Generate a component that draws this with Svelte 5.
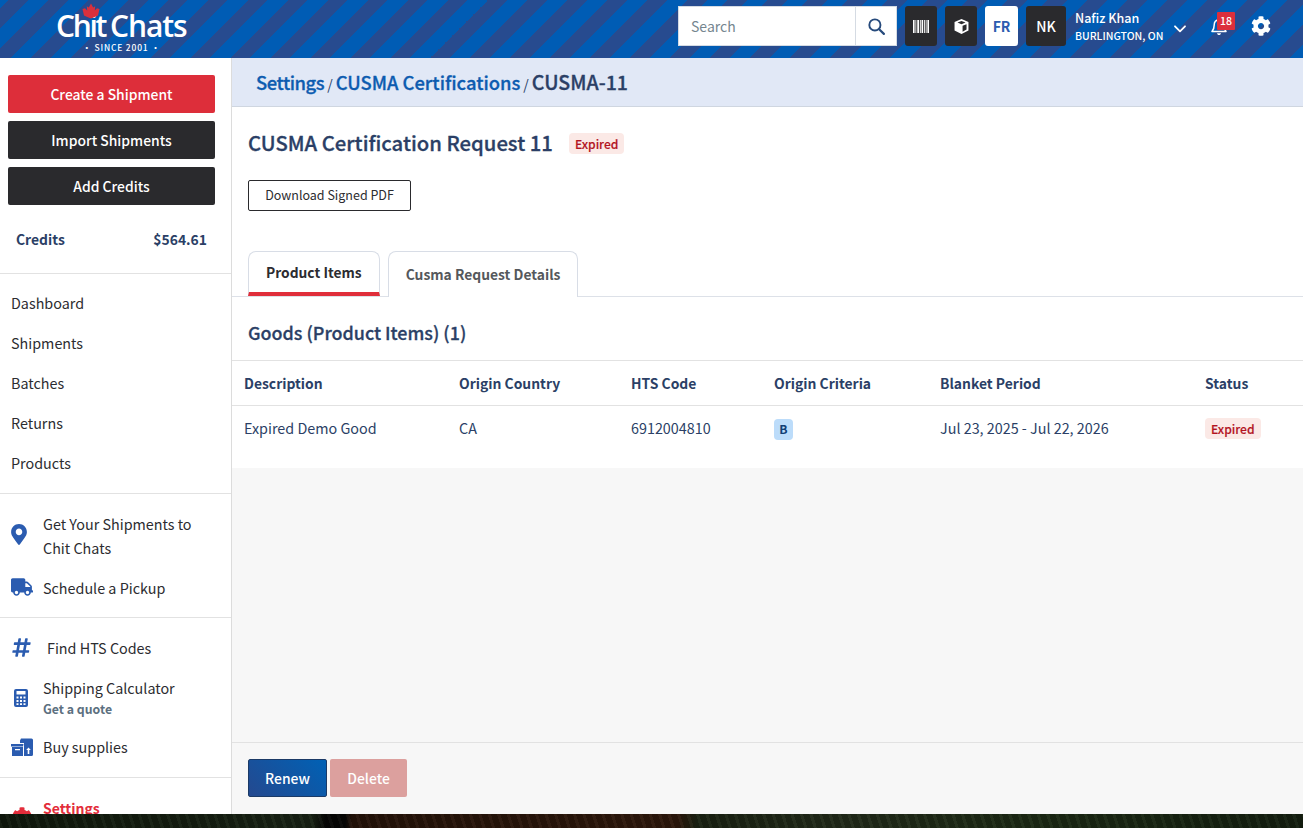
<script>
  const navMain = ['Dashboard', 'Shipments', 'Batches', 'Returns', 'Products'];
  const columns = [
    'Description',
    'Origin Country',
    'HTS Code',
    'Origin Criteria',
    'Blanket Period',
    'Status'
  ];
</script>

<div class="page">
  <header class="topbar">
    <div class="logo">
      <svg class="leaf" viewBox="0 0 20 15" aria-hidden="true">
        <path d="M10 0l2.200 4 2-1.200-.4 4.200 2.200-2.200 2.500.7-1.500 6.500c-2 1.200-4.500 2-7 3-2.500-1-5-1.800-7-3L1.500 5.500 4 4.800 6.200 7l-.4-4.200 2 1.200z" />
      </svg>
      <div class="logo-word"><span class="chit">Chit</span><span class="logo-gap"></span><span class="chats">Chats</span></div>
      <div class="logo-tag">· SINCE 2001 ·</div>
    </div>

    <div class="tools">
      <div class="search">
        <span class="search-input">Search</span>
        <span class="search-btn">
          <svg viewBox="0 0 18 18" width="17" height="17" aria-hidden="true">
            <circle cx="7.300" cy="7.300" r="5.900" fill="none" stroke="#264a7c" stroke-width="2" />
            <path d="M11.800 11.800l5 5" stroke="#264a7c" stroke-width="2.300" stroke-linecap="round" />
          </svg>
        </span>
      </div>
      <span class="tool dark narrow">
        <svg viewBox="0 0 15 12" width="16" height="13" aria-hidden="true">
          <path fill="#fff" d="M0 0h1.500v12H0zM2.300 0h.8v12h-.8zM4 0h1.700v12H4zM6.500 0h.8v12h-.8zM8 0h1.500v12H8zM10.300 0h.8v12h-.8zM11.900 0h.8v12h-.8zM13.500 0H15v12h-1.500z" />
        </svg>
      </span>
      <span class="tool dark narrow">
        <svg viewBox="0 0 14 14" width="15" height="15" aria-hidden="true">
          <path fill="#fff" fill-rule="evenodd" d="M7 0l6.500 2.700v8L7 14 .5 10.700v-8zM7 1.800L3.200 3.300 7 4.900l3.800-1.600zM8 6.300v5.500l3.700-1.900V4.800z" />
        </svg>
      </span>
      <span class="tool light">FR</span>
      <span class="tool dark wide">NK</span>
      <div class="user">
        <div class="user-name">Nafiz Khan</div>
        <div class="user-loc">BURLINGTON, ON</div>
      </div>
      <svg class="chevron" viewBox="0 0 12 8" width="12" height="8" aria-hidden="true">
        <path d="M1 1.300l5 5 5-5" fill="none" stroke="#fff" stroke-width="1.800" stroke-linecap="round" stroke-linejoin="round" />
      </svg>
      <span class="bell">
        <svg viewBox="0 0 16 18" width="16" height="18" aria-hidden="true">
          <path d="M8 2c-3 0-4.800 2.200-4.800 5 0 4-1.400 5.500-2.200 6.500h14c-.8-1-2.200-2.500-2.200-6.500C12.800 4.200 11 2 8 2z" fill="none" stroke="#fff" stroke-width="1.500" stroke-linejoin="round" />
          <path d="M6 15.200c.2 1.200 1 1.800 2 1.800s1.800-.6 2-1.800z" fill="#fff" />
        </svg>
        <span class="badge">18</span>
      </span>
      <svg class="cog" viewBox="0 0 512 512" width="20" height="20" aria-hidden="true">
        <path fill="#fff" d="M487.400 315.700l-42.600-24.600c4.300-23.200 4.300-47 0-70.200l42.600-24.600c4.900-2.800 7.100-8.600 5.500-14-11.100-35.600-30-67.800-54.700-94.600-3.800-4.100-10-5.100-14.800-2.300L380.800 110c-17.900-15.400-38.500-27.300-60.800-35.100V25.800c0-5.600-3.900-10.500-9.400-11.700-36.700-8.200-74.300-7.800-109.200 0-5.500 1.200-9.400 6.100-9.400 11.700V75c-22.200 7.900-42.800 19.800-60.800 35.100L88.700 85.500c-4.900-2.800-11-1.900-14.800 2.300-24.700 26.700-43.600 58.900-54.700 94.600-1.700 5.400.6 11.200 5.500 14L67.300 221c-4.300 23.200-4.300 47 0 70.200l-42.600 24.600c-4.900 2.800-7.100 8.600-5.500 14 11.100 35.600 30 67.800 54.700 94.600 3.800 4.100 10 5.100 14.800 2.300l42.600-24.600c17.900 15.400 38.500 27.300 60.800 35.100v49.200c0 5.600 3.900 10.500 9.400 11.700 36.700 8.200 74.300 7.800 109.200 0 5.500-1.200 9.400-6.100 9.400-11.700v-49.200c22.200-7.900 42.800-19.800 60.800-35.100l42.600 24.600c4.900 2.800 11 1.900 14.800-2.300 24.700-26.700 43.600-58.900 54.700-94.600 1.500-5.500-.7-11.300-5.600-14.100zM256 336c-44.100 0-80-35.900-80-80s35.900-80 80-80 80 35.900 80 80-35.900 80-80 80z" />
      </svg>
    </div>
  </header>

  <div class="shell">
    <aside class="sidebar">
      <div class="actions">
        <button class="action red">Create a Shipment</button>
        <button class="action black">Import Shipments</button>
        <button class="action black">Add Credits</button>
      </div>
      <div class="credits"><span>Credits</span><span>$564.61</span></div>

      <nav class="group plain">
        {#each navMain as item}
          <div class="plain-item">{item}</div>
        {/each}
      </nav>

      <div class="group first-icons">
        <div class="icon-item two-line">
          <span class="icon-box">
            <svg viewBox="0 0 384 512" width="16" height="21" aria-hidden="true">
              <path fill="#2b5cb0" d="M172.268 501.67C26.97 291.031 0 269.413 0 192 0 85.961 85.961 0 192 0s192 85.961 192 192c0 77.413-26.97 99.031-172.268 309.67-9.535 13.774-29.93 13.773-39.464 0zM192 272c44.183 0 80-35.817 80-80s-35.817-80-80-80-80 35.817-80 80 35.817 80 80 80z" />
            </svg>
          </span>
          <span>Get Your Shipments to<br />Chit Chats</span>
        </div>
        <div class="icon-item single">
          <span class="icon-box">
            <svg viewBox="0 0 640 512" width="22" height="18" aria-hidden="true">
              <path fill="#2b5cb0" d="M624 352h-16V243.900c0-12.700-5.100-24.900-14.100-33.900L494 110.100c-9-9-21.200-14.100-33.900-14.100H416V48c0-26.500-21.500-48-48-48H48C21.500 0 0 21.500 0 48v320c0 26.500 21.500 48 48 48h16c0 53 43 96 96 96s96-43 96-96h128c0 53 43 96 96 96s96-43 96-96h48c8.800 0 16-7.200 16-16v-32c0-8.800-7.200-16-16-16zM160 464c-26.500 0-48-21.500-48-48s21.500-48 48-48 48 21.500 48 48-21.500 48-48 48zm320 0c-26.500 0-48-21.500-48-48s21.500-48 48-48 48 21.500 48 48-21.500 48-48 48zm80-208H416V144h44.100l99.900 99.900V256z" />
            </svg>
          </span>
          <span>Schedule a Pickup</span>
        </div>
      </div>

      <div class="group second-icons">
        <div class="icon-item hts">
          <span class="icon-box">
            <svg viewBox="0 0 448 512" width="19" height="21" aria-hidden="true">
              <path fill="#2b5cb0" d="M440.667 182.109l7.143-40c1.313-7.355-4.342-14.109-11.813-14.109h-74.810l14.623-81.891C377.123 38.754 371.468 32 363.997 32h-40.632a12 12 0 0 0-11.813 9.891L296.175 128H197.540l14.623-81.891C213.477 38.754 207.822 32 200.350 32h-40.632a12 12 0 0 0-11.813 9.891L132.528 128H53.432a12 12 0 0 0-11.813 9.891l-7.143 40C33.163 185.246 38.818 192 46.289 192h74.810L98.242 320H19.146a12 12 0 0 0-11.813 9.891l-7.143 40C-1.123 377.246 4.532 384 12.003 384h74.810L72.190 465.891C70.877 473.246 76.532 480 84.003 480h40.632a12 12 0 0 0 11.813-9.891L151.826 384h98.634l-14.623 81.891C234.523 473.246 240.178 480 247.650 480h40.632a12 12 0 0 0 11.813-9.891L315.472 384h79.096a12 12 0 0 0 11.813-9.891l7.143-40c1.313-7.355-4.342-14.109-11.813-14.109h-74.810l22.857-128h79.096a12 12 0 0 0 11.813-9.891zM261.889 320h-98.634l22.857-128h98.634l-22.857 128z" />
            </svg>
          </span>
          <span>Find HTS Codes</span>
        </div>
        <div class="icon-item calc">
          <span class="icon-box">
            <svg viewBox="0 0 14 18" width="14" height="18" aria-hidden="true">
              <path fill="#2b5cb0" fill-rule="evenodd" d="M2 0h10a2 2 0 0 1 2 2v14a2 2 0 0 1-2 2H2a2 2 0 0 1-2-2V2a2 2 0 0 1 2-2zM2.500 2v3.500h9V2zM2.500 7.500v2h2v-2zM6 7.500v2h2v-2zM9.500 7.500v2h2v-2zM2.500 11v2h2v-2zM6 11v2h2v-2zM9.500 11v2h2v-2zM2.500 14.300v1.800h2v-1.800zM6 14.300v1.800h2v-1.800zM9.500 14.300v1.800h2v-1.800z" />
            </svg>
          </span>
          <span class="calc-text">
            <span class="calc-title">Shipping Calculator</span>
            <span class="calc-sub">Get a quote</span>
          </span>
        </div>
        <div class="icon-item buy">
          <span class="icon-box">
            <svg viewBox="0 0 22 18" width="22" height="18" aria-hidden="true">
              <path fill="#2b5cb0" d="M0 6h12.500l-.5 2.500H0zM1 9h11v9H1zM4 11v1.300h5V11zM9 2.500L10 .5h10.500A1.500 1.500 0 0 1 22 2v14.500a1.500 1.500 0 0 1-1.500 1.500H13V5H9z" />
              <path fill="#fff" d="M17.500 9.500l2.300 2.500h-1.500v4h-1.600v-4h-1.500z" />
            </svg>
          </span>
          <span>Buy supplies</span>
        </div>
      </div>

      <div class="group settings">
        <div class="icon-item settings-item">
          <span class="icon-box">
            <svg viewBox="0 0 512 512" width="20" height="20" aria-hidden="true">
              <path fill="#e32d3b" d="M487.400 315.700l-42.600-24.600c4.300-23.200 4.300-47 0-70.200l42.600-24.600c4.900-2.800 7.100-8.600 5.500-14-11.100-35.600-30-67.800-54.700-94.600-3.800-4.100-10-5.100-14.800-2.300L380.800 110c-17.900-15.400-38.500-27.300-60.800-35.100V25.800c0-5.600-3.900-10.500-9.400-11.700-36.700-8.200-74.300-7.800-109.200 0-5.500 1.200-9.400 6.100-9.400 11.700V75c-22.200 7.900-42.800 19.800-60.800 35.100L88.700 85.500c-4.900-2.800-11-1.900-14.800 2.300-24.700 26.700-43.600 58.900-54.700 94.600-1.700 5.400.6 11.200 5.500 14L67.300 221c-4.300 23.200-4.300 47 0 70.200l-42.600 24.600c-4.900 2.800-7.100 8.600-5.500 14 11.100 35.600 30 67.800 54.700 94.600 3.800 4.100 10 5.100 14.800 2.300l42.600-24.600c17.900 15.400 38.500 27.300 60.800 35.100v49.200c0 5.600 3.900 10.500 9.400 11.700 36.700 8.200 74.300 7.800 109.200 0 5.500-1.200 9.400-6.100 9.400-11.700v-49.200c22.200-7.900 42.800-19.800 60.800-35.100l42.600 24.600c4.900 2.800 11 1.900 14.800-2.300 24.700-26.700 43.600-58.900 54.700-94.600 1.500-5.500-.7-11.300-5.600-14.100zM256 336c-44.100 0-80-35.900-80-80s35.900-80 80-80 80 35.900 80 80-35.900 80-80 80z" />
            </svg>
          </span>
          <span class="settings-label">Settings</span>
        </div>
      </div>
    </aside>

    <main class="main">
      <div class="crumbs">
        <span class="crumb-link first">Settings</span><span class="sep">/</span><span class="crumb-link">CUSMA Certifications</span><span class="sep">/</span><span class="crumb-now">CUSMA-11</span>
      </div>

      <section class="content">
        <div class="title-row">
          <h1>CUSMA Certification Request 11</h1>
          <span class="tag">Expired</span>
        </div>
        <button class="download">Download Signed PDF</button>

        <div class="tabs">
          <div class="tab active">Product Items</div>
          <div class="tab">Cusma Request Details</div>
        </div>

        <h2>Goods (Product Items) (1)</h2>

        <div class="table">
          <div class="row head">
            {#each columns as col}
              <div>{col}</div>
            {/each}
          </div>
          <div class="row body">
            <div>Expired Demo Good</div>
            <div>CA</div>
            <div>6912004810</div>
            <div><span class="code">B</span></div>
            <div>Jul 23, 2025 - Jul 22, 2026</div>
            <div><span class="tag">Expired</span></div>
          </div>
        </div>
      </section>

      <div class="spacer"></div>

      <footer class="footer">
        <button class="renew">Renew</button>
        <button class="delete">Delete</button>
      </footer>
    </main>
  </div>
  <div class="photo"></div>
</div>

<style>
  :global(body) {
    margin: 0;
    background: #0f0f0a;
  }

  .page {
    width: 1303px;
    height: 828px;
    overflow: hidden;
    display: flex;
    flex-direction: column;
    font-family: "Noto Sans CJK SC", "Noto Sans", sans-serif;
    font-size: 14.350px;
    color: #2c2c30;
  }

  button {
    font-family: inherit;
    cursor: pointer;
  }

  .topbar {
    height: 58px;
    flex: none;
    display: flex;
    justify-content: space-between;
    box-sizing: border-box;
    padding-top: 6px;
    background: repeating-linear-gradient(135deg, #005cb4 0 5.660px, #274b8f 5.660px 19.800px, #005cb4 19.800px 28.284px);
  }

  .logo {
    position: relative;
    margin-left: 56px;
    margin-top: -6px;
    width: 132px;
    color: #fff;
    text-align: center;
  }

  .leaf {
    position: absolute;
    left: 25px;
    top: 3px;
    width: 20px;
    height: 16px;
    fill: #d9303c;
  }

  .logo-word {
    font-family: "Open Sans", sans-serif;
    font-size: 30px;
    font-weight: 600;
    line-height: 32px;
    padding-top: 10px;
    white-space: nowrap;
    text-align: left;
  }

  .chit {
    letter-spacing: -2.300px;
  }

  .chats {
    letter-spacing: -1.100px;
  }

  .logo-gap {
    display: inline-block;
    width: 5px;
  }

  .logo-tag {
    font-size: 8.500px;
    font-weight: 500;
    letter-spacing: 0.800px;
    line-height: 10px;
    margin-left: -1px;
  }

  .tools {
    display: flex;
    align-items: flex-start;
  }

  .search {
    width: 219px;
    height: 40px;
    display: flex;
    background: #fff;
    box-sizing: border-box;
    border: 1px solid #d5dbe3;
    margin-right: 8px;
  }

  .search-input {
    flex: 1;
    padding-left: 12px;
    line-height: 38px;
    font-size: 14px;
    color: #75868f;
  }

  .search-btn {
    width: 40px;
    border-left: 1px solid #d5dbe3;
    display: flex;
    align-items: center;
    justify-content: center;
  }

  .tool {
    height: 40px;
    border-radius: 3px;
    display: flex;
    align-items: center;
    justify-content: center;
    font-weight: 500;
    font-size: 14px;
    margin-right: 8px;
  }

  .dark {
    background: #2a2a2d;
    color: #fff;
  }

  .narrow {
    width: 32px;
  }

  .wide {
    width: 40px;
  }

  .light {
    width: 33px;
    background: #fff;
    color: #2b5cb0;
    font-weight: 700;
  }

  .user {
    margin-left: 1px;
    color: #fff;
    width: 97px;
  }

  .user-name {
    font-size: 12.500px;
    font-weight: 500;
    line-height: 16px;
    margin-top: 4px;
  }

  .user-loc {
    font-size: 10.500px;
    font-weight: 500;
    line-height: 16px;
    margin-top: 2px;
    white-space: nowrap;
  }

  .chevron {
    margin-top: 19px;
    margin-left: 2px;
  }

  .bell {
    position: relative;
    margin-left: 25px;
    margin-top: 12px;
    width: 16px;
    height: 18px;
  }

  .badge {
    position: absolute;
    left: 6px;
    top: -6px;
    width: 18px;
    height: 18px;
    background: #dc2f3c;
    border-radius: 1px;
    color: #fff;
    font-size: 10.500px;
    font-weight: 500;
    line-height: 18px;
    text-align: center;
  }

  .cog {
    margin-left: 24px;
    margin-top: 10px;
    margin-right: 32px;
  }

  .shell {
    height: 756px;
    flex: none;
    display: flex;
    background: #fff;
  }

  .photo {
    flex: 1;
    background:
      repeating-linear-gradient(72deg, rgba(255, 255, 255, 0.03) 0 3px, rgba(0, 0, 0, 0.12) 3px 9px),
      linear-gradient(90deg, #10190c 0, #182214 24%, #060604 25%, #060604 26.500%, #241208 27%, #2e180b 52%, #1a2212 53.500%, #222b1a 65%, #1c2a14 80%, #141f10 100%);
  }

  .sidebar {
    width: 232px;
    flex: none;
    box-sizing: border-box;
    border-right: 1px solid #dcdcdc;
    overflow: hidden;
    height: 756px;
  }

  .actions {
    display: flex;
    flex-direction: column;
    gap: 8px;
    padding: 17px 16px 0 8px;
  }

  .action {
    height: 38px;
    border: none;
    border-radius: 2px;
    color: #fff;
    font-size: 13.900px;
    font-weight: 500;
  }

  .red {
    background: #dd2e3a;
  }

  .black {
    background: #2a2a2d;
  }

  .credits {
    display: flex;
    justify-content: space-between;
    padding: 23px 24px 0 16px;
    height: 45px;
    line-height: 22px;
    font-size: 13.900px;
    font-weight: 700;
    color: #2b3f66;
  }

  .group {
    border-top: 1px solid #e2e2e2;
  }

  .plain {
    padding: 9px 0 10px;
    margin-top: 0;
  }

  .plain-item {
    height: 40px;
    line-height: 40px;
    padding-left: 11px;
  }

  .first-icons {
    padding-top: 18px;
    height: 124px;
    box-sizing: border-box;
  }

  .second-icons {
    height: 160px;
    box-sizing: border-box;
    padding-top: 18px;
  }

  .icon-item {
    display: flex;
    line-height: 24px;
    padding-left: 43px;
    position: relative;
  }

  .icon-box {
    position: absolute;
    left: 0;
    top: 0;
    width: 43px;
    display: flex;
    justify-content: flex-start;
    box-sizing: border-box;
    padding-left: 11px;
  }

  .two-line .icon-box {
    top: 12px;
  }

  .two-line {
    margin-bottom: 16px;
  }

  .single .icon-box {
    top: 2px;
  }

  .hts {
    padding-left: 47px;
    margin-bottom: 16px;
  }

  .hts .icon-box {
    top: 1px;
    padding-left: 12px;
  }

  .calc {
    margin-bottom: 17px;
  }

  .calc .icon-box {
    top: 13px;
    padding-left: 14px;
  }

  .calc-text {
    display: flex;
    flex-direction: column;
  }

  .calc-title {
    line-height: 24px;
  }

  .calc-sub {
    font-size: 12.300px;
    font-weight: 700;
    line-height: 18px;
    color: #5c7080;
  }

  .buy .icon-box {
    top: 3px;
  }

  .settings {
    padding-top: 18px;
  }

  .settings-item .icon-box {
    top: 11px;
    padding-left: 12px;
  }

  .settings-label {
    color: #e32d3b;
    font-weight: 700;
    font-size: 14px;
  }

  .main {
    flex: 1;
    min-width: 0;
    display: flex;
    flex-direction: column;
    background: #f7f7f7;
  }

  .crumbs {
    height: 49px;
    flex: none;
    box-sizing: border-box;
    padding: 0 0 0 24px;
    background: #e1e8f6;
    border-bottom: 1px solid #cfd6e0;
    line-height: 48px;
    font-size: 18.400px;
    font-weight: 500;
    -webkit-text-stroke: 0.3px currentColor;
    white-space: nowrap;
  }

  .crumb-link {
    color: #0d5cb0;
  }

  .first {
    letter-spacing: -0.450px;
  }

  .crumb-now {
    color: #2b3f66;
    font-size: 19.600px;
  }

  .sep {
    color: #2b3f66;
    font-size: 14px;
    font-weight: 400;
    -webkit-text-stroke: 0;
    margin: 0 3px;
  }

  .content {
    background: #fff;
    flex: none;
  }

  .title-row {
    display: flex;
    align-items: center;
    gap: 16px;
    padding: 22px 16px 0;
    height: 29px;
  }

  h1 {
    margin: -2px 0 0;
    font-size: 20.300px;
    font-weight: 500;
    -webkit-text-stroke: 0.3px currentColor;
    line-height: 29px;
    color: #2b3f66;
  }

  .tag {
    display: inline-block;
    background: #fbe9e6;
    color: #b3131f;
    font-size: 12.100px;
    font-weight: 500;
    -webkit-text-stroke: 0.15px currentColor;
    line-height: 21px;
    padding: 0 6px;
    border-radius: 4px;
  }

  .download {
    display: block;
    margin: 22px 0 0 16px;
    width: 163px;
    height: 31px;
    background: #fff;
    border: 1px solid #2a2a2d;
    border-radius: 2px;
    font-size: 12.500px;
    color: #2c2c30;
    padding: 0 0 2px;
  }

  .tabs {
    display: flex;
    gap: 8px;
    padding: 40px 16px 0;
    border-bottom: 1px solid #dde1e8;
    height: 45px;
  }

  .tab {
    box-sizing: border-box;
    height: 46px;
    padding: 0 17px;
    border: 1px solid #d8dde6;
    border-bottom: none;
    border-radius: 8px 8px 0 0;
    line-height: 44px;
    font-weight: 700;
    font-size: 13.850px;
    color: #55585c;
    background: #fff;
  }

  .tab.active {
    height: 45px;
    line-height: 41px;
    font-size: 13.800px;
    color: #2c2c30;
    border-bottom: 4px solid #e02e3a;
    border-radius: 8px 8px 0 0;
  }

  h2 {
    margin: 0;
    padding: 0 16px;
    height: 63px;
    line-height: 70px;
    font-size: 17.900px;
    font-weight: 500;
    -webkit-text-stroke: 0.3px currentColor;
    color: #2b3f66;
    box-sizing: border-box;
  }

  .row {
    display: grid;
    grid-template-columns: 215px 172px 143px 166px 265px 86px;
    padding-left: 12px;
    align-items: center;
    color: #2b3f66;
  }

  .head {
    height: 46px;
    box-sizing: border-box;
    border-top: 1px solid #e2e2e2;
    border-bottom: 1px solid #e2e2e2;
    font-weight: 700;
    font-size: 13.900px;
  }

  .body {
    height: 62px;
    padding-bottom: 20px;
    box-sizing: border-box;
  }

  .body .tag,
  .code {
    transform: translateY(1px);
  }

  .code {
    display: inline-block;
    width: 19px;
    height: 21px;
    line-height: 21px;
    text-align: center;
    border-radius: 4px;
    background: #bcdcfa;
    color: #123f75;
    font-size: 12.200px;
    font-weight: 700;
  }

  .spacer {
    flex: 1;
  }

  .footer {
    height: 72px;
    flex: none;
    box-sizing: border-box;
    border-top: 1px solid #e2e2e2;
    padding: 16px 16px 0;
    display: flex;
    gap: 3px;
  }

  .renew,
  .delete {
    height: 38px;
    border-radius: 2px;
    font-size: 13.900px;
    font-weight: 500;
    color: #fff;
    padding: 0;
  }

  .renew {
    width: 79px;
    background: linear-gradient(45deg, #24498f, #0061b5);
    border: 1px solid #1b3a66;
  }

  .delete {
    width: 77px;
    background: #dca09e;
    border: none;
  }
</style>
